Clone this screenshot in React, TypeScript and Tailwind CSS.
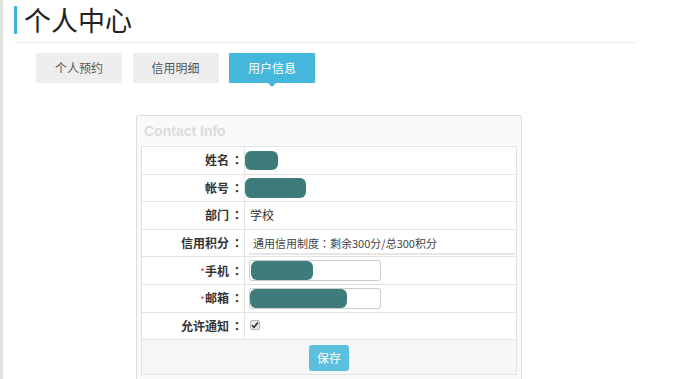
import React from 'react';

const cjk = { fontFamily: '"Noto Sans CJK SC", "Noto Sans", sans-serif' };
const colon = { fontFamily: '"Noto Sans CJK TC", sans-serif' };

interface RowProps {
  label: string;
  required?: boolean;
  children?: React.ReactNode;
}

const Blob: React.FC<{ w: string }> = ({ w }) => (
  <span className={`block h-[19px] rounded-[6px] bg-[#3d7c7a] ${w}`} />
);

const Row: React.FC<RowProps> = ({ label, required, children }) => (
  <div className="flex h-[27.6px] border-b border-[#e3e3e3]">
    <div className="w-[103px] shrink-0 border-r border-[#e3e3e3] flex items-center justify-end pr-[1px] text-[12px] font-bold text-[#333]">
      {required && <span className="text-[#e4393c] font-normal text-[10px] self-start mt-[7px]">*</span>}
      {label}
      <span className="ml-[2px]" style={colon}>：</span>
    </div>
    <div className="flex-1 flex items-center pl-[4px] text-[12px] text-[#333]">{children}</div>
  </div>
);

const tabs = ['个人预约', '信用明细', '用户信息'];

export default function App() {
  return (
    <div className="min-h-screen bg-white border-l-[3px] border-[#e1e1e1]" style={cjk}>
      <div className="pl-[11px] pt-[6px]">
        <h1 className="border-l-[3px] border-[#3cb4d8] pl-[7px] h-[28px] text-[27px] leading-[28px] text-[#222] font-normal">
          个人中心
        </h1>
        <div className="mt-[8px] w-[622px] border-b border-[#ececec]" />
      </div>

      <div className="flex gap-[10.5px] pl-[33px] mt-[10px]">
        {tabs.map((t, i) => (
          <div
            key={t}
            className={
              i === 2
                ? 'relative w-[86px] h-[30px] flex items-center justify-center bg-[#45b7db] text-white text-[12px]'
                : 'w-[86px] h-[30px] flex items-center justify-center bg-[#eeeeee] text-[#555] text-[12px]'
            }
          >
            {t}
            {i === 2 && (
              <span className="absolute left-1/2 -translate-x-1/2 top-full w-0 h-0 border-l-[4px] border-r-[4px] border-t-[4px] border-l-transparent border-r-transparent border-t-[#45b7db]" />
            )}
          </div>
        ))}
      </div>

      <div className="ml-[133px] mt-[32px] w-[386px] border border-b-0 border-[#dddddd] rounded-t-[3px] bg-[#fafafa] px-[4px] pb-[6px]">
        <div className="h-[30px] flex items-center pl-[3px] text-[14px] font-bold text-[#dcdcdc]" style={{ fontFamily: '"Liberation Sans", Arial, sans-serif' }}>
          Contact Info
        </div>
        <div className="border border-[#e3e3e3] bg-white">
          <Row label="姓名">
            <Blob w="w-[33px] -ml-[4px]" />
          </Row>
          <Row label="帐号">
            <Blob w="w-[61px] -ml-[4px] h-[20px]" />
          </Row>
          <Row label="部门">
            <span className="pl-[1px]">学校</span>
          </Row>
          <Row label="信用积分">
            <div className="w-full mr-[1px] h-[22px] flex items-center border-b-2 border-[#e6e6e6] pl-[4px] text-[11px] text-[#444] mt-[2px]">
              通用信用制度<span style={colon}>：</span>剩余300分/总300积分
            </div>
          </Row>
          <Row label="手机" required>
            <div className="w-[132px] h-[21px] border border-[#cccccc] rounded-[3px] bg-white pl-[1px] flex items-center">
              <Blob w="w-[62px] h-[17px]" />
            </div>
          </Row>
          <Row label="邮箱" required>
            <div className="w-[132px] h-[21px] border border-[#cccccc] rounded-[3px] bg-white flex items-center">
              <Blob w="w-[97px] h-[17px]" />
            </div>
          </Row>
          <Row label="允许通知">
            <span className="ml-[1px] mb-[2px] w-[10px] h-[10px] rounded-[2px] bg-[#e6e6e6] border border-[#b5b5b5] flex items-center justify-center">
              <svg width="8" height="8" viewBox="0 0 8 8">
                <path d="M1 4.2 L3 6.2 L7 1.5" stroke="#333" strokeWidth="1.6" fill="none" />
              </svg>
            </span>
          </Row>
          <div className="h-[34px] bg-[#f7f7f7] flex items-center justify-center">
            <button className="w-[40px] h-[26px] rounded-[3px] bg-[#5bc0de] text-white text-[12px] mt-[2px]">保存</button>
          </div>
        </div>
      </div>
    </div>
  );
}
